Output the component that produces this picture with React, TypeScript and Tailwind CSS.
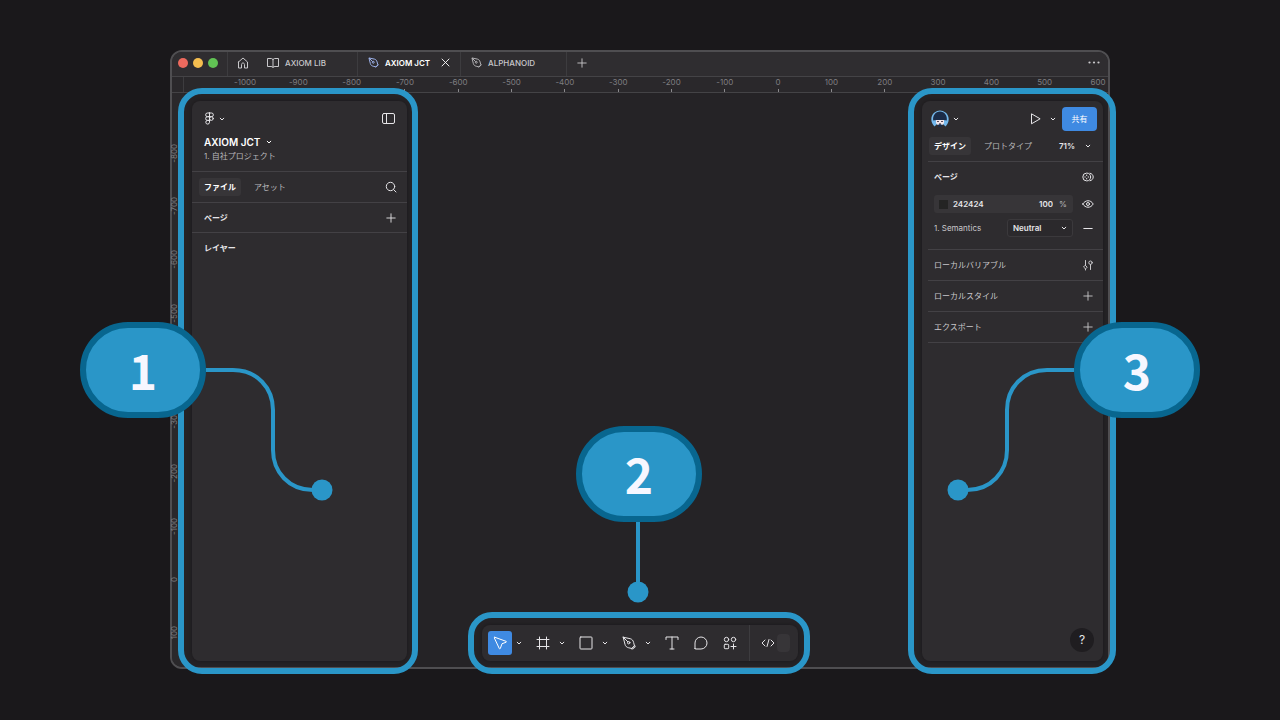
import { useState } from "react";
import type { ReactNode } from "react";
import clsx from "clsx";

const COLUMNS = [
  -1000, -900, -800, -700, -600, -500, -400, -300, -200, -100, 0, 100, 200, 300,
  400, 500, 600,
];
const ROWS = [-800, -700, -600, -500, -400, -300, -200, -100, 0, 100];

type IconProps = { w?: number; h?: number; children: ReactNode };

function Icon({ w = 14, h = 14, children }: IconProps) {
  return (
    <svg
      width={w}
      height={h}
      viewBox={`0 0 ${w} ${h}`}
      fill="none"
      stroke="currentColor"
      strokeWidth="1"
      strokeLinecap="round"
      strokeLinejoin="round"
      className="shrink-0"
      aria-hidden="true"
    >
      {children}
    </svg>
  );
}

function Chevron() {
  return (
    <Icon w={6} h={6}>
      <path d="M1.2 2.2 3 4l1.8-1.8" />
    </Icon>
  );
}

function Plus() {
  return (
    <Icon w={10} h={10}>
      <path d="M5 .8v8.4M.8 5h8.4" strokeWidth=".9" />
    </Icon>
  );
}

function PenNib() {
  return (
    <Icon>
      <path d="M1.2 1.2 8.2 2.7c1.9.5 3 1.9 3.4 3.7l.9 3.6-2.500 2.500-3.300-.7c-1.8-.4-3.300-1.600-3.700-3.400L1.200 1.200Z" />
      <path d="m1.500 1.500 4.300 4.300M9.500 12.700l3.200-3.200.4.7c.2.3.2.600-.1.900l-1.700 1.700c-.3.3-.6.3-.9.100Z" />
      <circle cx="6.7" cy="6.7" r="1.2" />
    </Icon>
  );
}

function SmallPen({ active }: { active?: boolean }) {
  return (
    <span className={active ? "text-[#a3b8f2]" : "text-[#b9b8bb]"}>
      <svg
        width="11"
        height="11"
        viewBox="0 0 14 14"
        fill="none"
        stroke="currentColor"
        strokeWidth="1.2"
        strokeLinejoin="round"
        aria-hidden="true"
      >
        <path d="M1.2 1.2 8.2 2.7c1.9.5 3 1.9 3.4 3.7l.9 3.6-2.500 2.500-3.300-.7c-1.8-.4-3.300-1.600-3.700-3.400L1.200 1.200Z" />
        <path d="m1.500 1.500 4.300 4.300M9.800 13.300l3.700-3.700" />
        <circle cx="6.7" cy="6.7" r="1.2" />
      </svg>
    </span>
  );
}

function TitleBar() {
  return (
    <div className="flex h-[25px] items-stretch rounded-t-[10px] border-b border-[#444346] bg-[#2f2d30] text-[#c9c8cb]">
      <div className="flex items-center gap-[5px] pr-[9px] pb-[3px] pl-1.5">
        <span className="size-[10px] rounded-full bg-[#ed6a5e]" />
        <span className="size-[10px] rounded-full bg-[#f5be4f]" />
        <span className="size-[10px] rounded-full bg-[#61c354]" />
      </div>
      <button
        aria-label="Home"
        className="flex w-[31px] items-center justify-center border-l border-[#3d3c3f] pb-[3px]"
      >
        <Icon w={12} h={12}>
          <path d="M1.5 5 6 1l4.500 4v6h-3V7.500c0-2-3-2-3 0V11h-3V5Z" />
        </Icon>
      </button>
      <button className="flex w-[100px] items-center gap-1.5 border-r border-[#3d3c3f] pb-[3px] pl-[9px] font-medium">
        <Icon w={12} h={12}>
          <path d="M6 2.500v8M6 2.500C5.500 1.800 5 1.500 4 1.500H.5v8H4c1 0 1.500.3 2 1 .5-.7 1-1 2-1h3.500v-8H8c-1 0-1.500.3-2 1Z" />
        </Icon>
        AXIOM LIB
      </button>
      <div className="flex w-[103px] items-center border-r border-[#3d3c3f] pb-[3px] pl-[10px] font-semibold text-white">
        <button className="flex items-center gap-1.5">
          <SmallPen active />
          AXIOM JCT
        </button>
        <button aria-label="Close tab" className="ml-auto pr-[10px]">
          <Icon w={9} h={9}>
            <path d="m1 1 7 7M8 1 1 8" strokeWidth=".9" />
          </Icon>
        </button>
      </div>
      <button className="flex w-[106px] items-center gap-1.5 border-r border-[#3d3c3f] pb-[3px] pl-[10px] font-medium">
        <SmallPen />
        ALPHANOID
      </button>
      <button
        aria-label="New tab"
        className="flex w-[30px] items-center justify-center pb-[3px]"
      >
        <Plus />
      </button>
      <button aria-label="More" className="ml-auto pr-2 pb-[3px]">
        <svg width="12" height="3" viewBox="0 0 12 3" fill="currentColor">
          <circle cx="1.5" cy="1.5" r="1.1" />
          <circle cx="6" cy="1.5" r="1.1" />
          <circle cx="10.5" cy="1.5" r="1.1" />
        </svg>
      </button>
    </div>
  );
}

function TopRuler() {
  return (
    <div className="flex h-4 border-b border-[#444346] bg-[#2a282b] text-[#7e7d80]">
      <div className="w-3 shrink-0 border-r border-[#3d3c3f]" />
      <div className="flex flex-1 justify-between pl-[51px]">
        {COLUMNS.map((n) => (
          <div key={n} className="flex w-5 flex-col items-center justify-between">
            <span className="leading-[11px]">{n}</span>
            <span className="h-[3px] w-px bg-[#8a898c]" />
          </div>
        ))}
      </div>
    </div>
  );
}

function LeftRuler() {
  return (
    <div className="flex w-3 flex-col justify-between rounded-bl-[10px] bg-[#2a282b] pt-[50px] pb-6 text-[#7e7d80]">
      {ROWS.map((n) => (
        <div key={n} className="flex h-5 items-center">
          <span className="rotate-180 leading-[5px] [writing-mode:vertical-rl]">
            {n}
          </span>
        </div>
      ))}
    </div>
  );
}

/* blue outline drawn around each highlighted region */
function Highlight({ className }: { className?: string }) {
  return (
    <div
      className={clsx(
        "pointer-events-none absolute -top-[13px] -bottom-[13px] -left-[14px] rounded-[24px] border-[6px] border-[#2a96c8]",
        className
      )}
    />
  );
}

function Tab({
  label,
  active,
  onClick,
}: {
  label: string;
  active: boolean;
  onClick: () => void;
}) {
  return (
    <button
      role="tab"
      aria-selected={active}
      onClick={onClick}
      className={clsx(
        "h-[18px] rounded-[3px] px-[5px]",
        active ? "bg-[#373538] font-bold text-white" : "text-[#b9b8bb]"
      )}
    >
      {label}
    </button>
  );
}

function LeftPanel() {
  const [tab, setTab] = useState("ファイル");

  return (
    <aside className="relative my-2 mb-1.5 ml-2 w-[215px] rounded-lg bg-[#2e2c2f] shadow-[0_0_4px_#1a181b]">
      <div className="flex h-[71px] flex-col border-b border-[#434145] pt-[11px] pr-3 pl-3">
        <div className="flex items-center justify-between">
          <button aria-label="Main menu" className="flex items-center gap-1">
            <Icon w={11} h={13}>
              <path d="M5.500 1h-2a1.850 1.850 0 0 0 0 3.700h2V1Zm0 0h2a1.850 1.850 0 0 1 0 3.700h-2M5.500 4.700h-2a1.850 1.850 0 0 0 0 3.700h2V4.700ZM5.500 8.400h-2a1.850 1.850 0 1 0 2 1.850V8.400Z" />
              <circle cx="7.4" cy="6.550" r="1.850" />
            </Icon>
            <Chevron />
          </button>
          <button aria-label="Toggle sidebar">
            <Icon w={13} h={11}>
              <rect x=".5" y=".5" width="12" height="10" rx="1.500" />
              <path d="M4.500.5v10" />
            </Icon>
          </button>
        </div>
        <button className="mt-[9px] flex items-center gap-1.5 text-[10px] leading-4 font-semibold text-white">
          AXIOM JCT
          <Chevron />
        </button>
        <p className="leading-3 text-[#b9b8bb]">1. 自社プロジェクト</p>
      </div>
      <div className="flex h-[31px] items-center justify-between border-b border-[#434145] pr-[10px] pl-[7px]">
        <div role="tablist" className="flex gap-2">
          {["ファイル", "アセット"].map((name) => (
            <Tab
              key={name}
              label={name}
              active={tab === name}
              onClick={() => setTab(name)}
            />
          ))}
        </div>
        <button aria-label="Search">
          <Icon w={12} h={12}>
            <circle cx="5.500" cy="5.500" r="4.200" />
            <path d="m8.600 8.600 2.400 2.400" />
          </Icon>
        </button>
      </div>
      <div className="flex h-[30px] items-center justify-between border-b border-[#434145] pr-[11px] pl-3">
        <h2 className="font-bold">ページ</h2>
        <button aria-label="Add page">
          <Plus />
        </button>
      </div>
      <div className="flex h-[30px] items-center pl-3">
        <h2 className="font-bold">レイヤー</h2>
      </div>
      <Highlight className="-right-[11px]" />
    </aside>
  );
}

function Avatar() {
  return (
    <svg width="18" height="18" viewBox="0 0 18 18" aria-hidden="true">
      <path
        d="M3.500 16.500C-1 12-.5 5.500 3.500 2.500 7-.3 11-.3 14.500 2.500c4 3 4.500 9.500 0 14l-2-2h-7Z"
        fill="#74b8ec"
      />
      <path
        d="M2.200 10.500C1.500 5.500 4.500 1.500 9 1.500s7.500 4 6.800 9l-3.300-.500h-7Z"
        fill="#1b2c48"
      />
      <path d="M5 10h8v3.300L11 15l-2-.8L7 15l-2-1.700Z" fill="#f1e6ea" />
      <path d="M6 11h2v1H6ZM10 11h2v1h-2ZM8.300 13h1.400v1H8.300Z" fill="#5a4a58" />
      <path d="M7 15l2-1 2 1v2H7Z" fill="#1b2c48" />
    </svg>
  );
}

function SettingRow({ label, children }: { label: string; children: ReactNode }) {
  return (
    <div className="ml-1.5 flex h-[31px] items-center justify-between border-b border-[#434145] pr-[10px] pb-px pl-1.5 text-[#c9c8cb]">
      <h2>{label}</h2>
      <button aria-label={label}>{children}</button>
    </div>
  );
}

function RightPanel() {
  const [tab, setTab] = useState("デザイン");

  return (
    <aside className="relative my-2 mr-[5px] mb-1.5 ml-auto w-[181px] rounded-lg bg-[#2e2c2f] shadow-[0_0_4px_#1a181b]">
      <div className="ml-1.5 flex h-[61px] flex-col border-b border-[#434145] pt-1.5">
        <div className="flex h-6 items-center pr-1.5 pl-[3px]">
          <button aria-label="Account" className="flex items-center gap-1">
            <Avatar />
            <Chevron />
          </button>
          <button aria-label="Present" className="ml-auto">
            <Icon w={11} h={12}>
              <path d="M1.500 1.200v9.600L9.800 6Z" />
            </Icon>
          </button>
          <button aria-label="Present options" className="px-[9px]">
            <Chevron />
          </button>
          <button className="-ml-[3px] h-6 w-[35px] rounded-[4px] bg-[#3f8ae2] text-white">
            共有
          </button>
        </div>
        <div className="mt-1.5 flex items-center pr-3 pl-px">
          <div role="tablist" className="flex gap-2">
            {["デザイン", "プロトタイプ"].map((name) => (
              <Tab
                key={name}
                label={name}
                active={tab === name}
                onClick={() => setTab(name)}
              />
            ))}
          </div>
          <button className="ml-auto flex items-center gap-2.5 font-semibold">
            71%
            <Chevron />
          </button>
        </div>
      </div>

      <div className="ml-1.5 h-[88px] border-b border-[#434145] pr-[9px] pl-1.5">
        <div className="flex h-[30px] items-center justify-between">
          <h2 className="font-bold">ページ</h2>
          <button aria-label="Styles">
            <Icon w={12} h={10}>
              <circle cx="4.700" cy="5" r="3.900" />
              <path d="M8 1.200c4.400.8 4.400 6.800 0 7.600" />
              <path d="M4.700 3v.600M4.700 6.400V7M2.800 5h.500M6.100 5h.500" />
            </Icon>
          </button>
        </div>
        <div className="mt-[3px] flex items-center justify-between">
          <div className="flex h-[18px] w-[139px] items-center rounded-[3px] bg-[#373538] pl-[5px]">
            <span className="size-[9px] bg-[#242424]" />
            <input
              aria-label="Page colour"
              defaultValue="242424"
              className="ml-[5px] w-[60px] bg-transparent font-semibold outline-none"
            />
            <input
              aria-label="Opacity"
              defaultValue="100"
              className="ml-auto w-[18px] bg-transparent text-right font-semibold outline-none"
            />
            <span className="w-5 text-center text-[#b9b8bb]">%</span>
          </div>
          <button aria-label="Toggle visibility">
            <Icon w={12} h={10}>
              <path d="M.8 5C3.300.6 8.700.6 11.200 5 8.700 9.400 3.300 9.400.8 5Z" />
              <circle cx="6" cy="5" r="1.500" />
            </Icon>
          </button>
        </div>
        <div className="mt-1.5 flex items-center">
          <label htmlFor="semantics" className="text-[#c9c8cb]">
            1. Semantics
          </label>
          <div className="relative ml-auto">
            <select
              id="semantics"
              className="h-[18px] w-[66px] appearance-none rounded-[3px] border border-[#3b393c] bg-[#2b292c] pl-[5px] font-semibold outline-none"
            >
              <option>Neutral</option>
            </select>
            <span className="pointer-events-none absolute top-1.5 right-1.5">
              <Chevron />
            </span>
          </div>
          <button aria-label="Remove mode" className="ml-2.5 pr-px">
            <Icon w={10} h={10}>
              <path d="M.8 5.500h8.400" />
            </Icon>
          </button>
        </div>
      </div>

      <SettingRow label="ローカルバリアブル">
        <Icon w={10} h={12}>
          <path d="M2.500 1.500v5M2.500 10v1M7.500 5.500v5" />
          <path d="m2.500 6.500 1.700 1.700-1.700 1.700L.8 8.200Z" />
          <circle cx="7.500" cy="3.700" r="1.700" />
        </Icon>
      </SettingRow>
      <SettingRow label="ローカルスタイル">
        <Plus />
      </SettingRow>
      <SettingRow label="エクスポート">
        <Plus />
      </SettingRow>

      <button
        aria-label="Help"
        className="absolute right-[9px] bottom-[9px] size-6 rounded-full bg-[#1f1d20] text-xs leading-6"
      >
        ?
      </button>
      <Highlight className="-right-[13px]" />
    </aside>
  );
}

function Tool({
  label,
  menu,
  active,
  children,
}: {
  label: string;
  menu?: boolean;
  active?: boolean;
  children: ReactNode;
}) {
  return (
    <div className="flex items-center">
      <button
        aria-label={label}
        className={clsx(
          "flex size-6 items-center justify-center rounded-[3px]",
          active && "bg-[#3f8ae2] text-white"
        )}
      >
        {children}
      </button>
      {menu && (
        <button
          aria-label={`${label} options`}
          className="flex h-6 w-[14px] items-center justify-center"
        >
          <Chevron />
        </button>
      )}
    </div>
  );
}

function Toolbar() {
  return (
    <div className="absolute bottom-1.5 left-1/2 flex h-9 w-[316px] -translate-x-1/2 items-center gap-[5px] rounded-lg bg-[#2e2c2f] px-1.5 shadow-[0_0_4px_#1a181b]">
      <Tool label="Move" menu active>
        <Icon>
          <path d="M1.900 1.300 13 5.300c.5.200.5.800 0 1L9 7.700 7.300 12.500c-.2.500-.8.500-1 0L1.300 1.900c-.1-.4.200-.7.600-.6Z" />
        </Icon>
      </Tool>
      <Tool label="Frame" menu>
        <Icon>
          <path d="M3.500 1v12M10.500 1v12M1 3.500h12M1 10.500h12" />
        </Icon>
      </Tool>
      <Tool label="Rectangle" menu>
        <Icon>
          <rect x="1" y="1" width="12" height="12" rx=".8" />
        </Icon>
      </Tool>
      <Tool label="Pen" menu>
        <PenNib />
      </Tool>
      <Tool label="Text">
        <Icon>
          <path d="M1 3.500V1h12v2.500M7 1v12M5 13h4" />
        </Icon>
      </Tool>
      <Tool label="Comment">
        <Icon>
          <path d="M1 12.500V7a6 6 0 1 1 6 6H1.500a.5.5 0 0 1-.5-.5Z" />
        </Icon>
      </Tool>
      <Tool label="Actions">
        <Icon>
          <circle cx="3.500" cy="3.500" r="2.200" />
          <circle cx="10.500" cy="3.500" r="2.200" />
          <rect x="1.300" y="8.300" width="4.400" height="4.400" rx=".8" />
          <path d="M10.500 8v5M8 10.500h5" />
        </Icon>
      </Tool>
      <span className="ml-0.5 h-full w-px bg-[#3d3c3f]" />
      <button
        aria-label="Dev mode"
        className="ml-1.5 flex items-center gap-0.5"
      >
        <Icon w={14} h={10}>
          <path d="M4 2 1 5l3 3M10 2l3 3-3 3M8 1.500l-2 7" />
        </Icon>
        <span className="h-[18px] w-[13px] rounded-[4px] bg-[#373538]" />
      </button>
      <Highlight className="-right-[12px]" />
      <div className="absolute inset-x-0 bottom-full mb-[22px] flex flex-col items-center pr-0.5">
        <Badge n={2} />
        <svg width="24" height="81" viewBox="0 0 24 81" fill="#2a96c8">
          <path d="M11 0v70" stroke="#2a96c8" strokeWidth="4" />
          <circle cx="11" cy="70" r="10.500" />
        </svg>
      </div>
    </div>
  );
}

function Badge({ n }: { n: number }) {
  return (
    <div className="flex h-24 w-[126px] shrink-0 items-center justify-center rounded-[48px] border-[6px] border-[#08668f] bg-[#2a96c8] pb-0.5 font-['Noto_Sans_CJK_JP',sans-serif] text-5xl font-bold text-[#f7f7ff]">
      {n}
    </div>
  );
}

function Connector({ flip }: { flip?: boolean }) {
  return (
    <svg
      width="127"
      height="135"
      viewBox="0 0 127 135"
      className={clsx("mt-[46px]", flip && "-scale-x-100")}
      aria-hidden="true"
    >
      <path
        d="M0 2h27c24 0 40 18 40 40v40c0 22 16 40 40 40h9"
        fill="none"
        stroke="#2a96c8"
        strokeWidth="4"
      />
      <circle cx="116" cy="122" r="10.500" fill="#2a96c8" />
    </svg>
  );
}

export default function App() {
  return (
    <main className="relative flex min-h-screen bg-[#1a181b] px-[170px] pt-[50px] pb-[51px] font-['Inter','Noto_Sans_CJK_JP',sans-serif] text-[8px] leading-3 text-[#e6e5e8]">
      <div className="relative flex flex-1 flex-col rounded-xl border-2 border-[#4f4e51] bg-[#252326]">
        <TitleBar />
        <TopRuler />
        <div className="flex flex-1">
          <LeftRuler />
          <LeftPanel />
          <RightPanel />
        </div>
        <Toolbar />
      </div>
      <div className="pointer-events-none absolute top-[322px] left-20 flex items-start">
        <Badge n={1} />
        <Connector />
      </div>
      <div className="pointer-events-none absolute top-[322px] right-20 flex flex-row-reverse items-start">
        <Badge n={3} />
        <Connector flip />
      </div>
    </main>
  );
}
